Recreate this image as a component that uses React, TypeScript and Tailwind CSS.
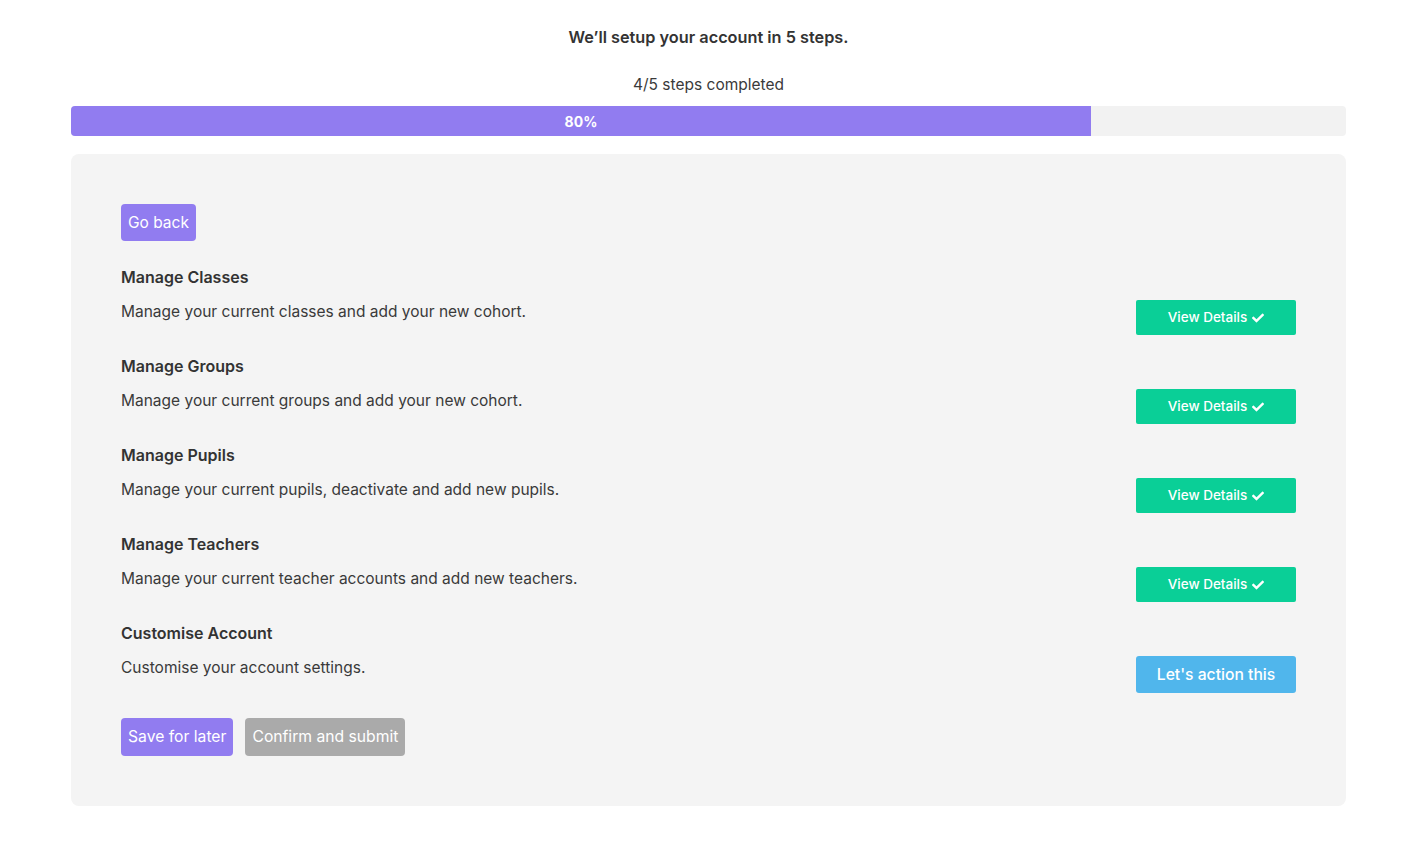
import { FaCheck } from 'react-icons/fa';

const steps = [
  { title: 'Manage Classes', text: 'Manage your current classes and add your new cohort.', done: true },
  { title: 'Manage Groups', text: 'Manage your current groups and add your new cohort.', done: true },
  { title: 'Manage Pupils', text: 'Manage your current pupils, deactivate and add new pupils.', done: true },
  { title: 'Manage Teachers', text: 'Manage your current teacher accounts and add new teachers.', done: true },
  { title: 'Customise Account', text: 'Customise your account settings.', done: false },
];

export default function App() {
  const progress = 80;

  return (
    <div className="min-h-screen bg-white text-[#3a3a3a] font-['Inter','Noto_Sans',sans-serif]">
      <div className="ml-[71px] w-[1275px] pt-[26px]">
        {/* ─── Header ─── */}
        <h1 className="text-center text-[16.3px] leading-[22px] font-semibold text-[#333]">
          We’ll setup your account in 5 steps.
        </h1>
        <p className="mt-[26px] text-center text-[15.5px] leading-[22px]">4/5 steps completed</p>

        {/* ─── Progress ─── */}
        <div className="mt-[10px] h-[30px] rounded-[4px] bg-[#f2f2f2] overflow-hidden flex">
          <div
            className="h-full bg-[#917cf0] flex items-center justify-center text-white text-[14px] font-bold"
            style={{ width: `${progress}%` }}
          >
            {progress}%
          </div>
        </div>

        {/* ─── Card ─── */}
        <div className="mt-[18px] rounded-[8px] bg-[#f4f4f4] p-[50px]">
          <button className="h-[37px] px-[7px] rounded-[4px] bg-[#917cf0] text-white text-[15.5px]">
            Go back
          </button>

          <div className="mt-[24px] flex flex-col gap-[19px]">
            {steps.map((s) => (
              <div key={s.title}>
                <h3 className="text-[16px] leading-[24px] font-semibold text-[#333]">{s.title}</h3>
                <div className="mt-[11px] flex items-start justify-between">
                  <p className="text-[15.5px] leading-[24px]">{s.text}</p>
                  {s.done ? (
                    <button className="w-[160px] h-[35px] rounded-[2px] bg-[#0acf97] text-white text-[13.5px] font-medium flex items-center justify-center gap-[5px]">
                      View Details
                      <FaCheck className="w-[12px] h-[12px]" />
                    </button>
                  ) : (
                    <button className="w-[160px] h-[37px] rounded-[3px] bg-[#50b6ec] text-white text-[15.7px] font-medium">
                      Let's action this
                    </button>
                  )}
                </div>
              </div>
            ))}
          </div>

          <div className="mt-[25px] flex gap-[12px]">
            <button className="h-[38px] px-[7px] rounded-[4px] bg-[#917cf0] text-white text-[15.7px]">
              Save for later
            </button>
            <button className="h-[38px] px-[7px] rounded-[4px] bg-[#aaaaaa] text-white text-[15.7px]">
              Confirm and submit
            </button>
          </div>
        </div>
      </div>
    </div>
  );
}
